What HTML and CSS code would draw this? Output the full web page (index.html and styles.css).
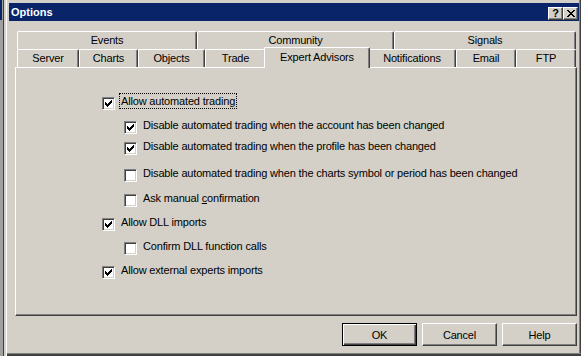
FILE: index.html
```html
<!DOCTYPE html>
<html lang="en">
<head>
    <meta charset="UTF-8">
    <title>Options</title>
    <link rel="stylesheet" href="styles.css">
</head>
<body>
    <div class="screen">
        <div class="edge"></div>

        <div class="window">
            <div class="titlebar">
                <span class="title">Options</span>
                <div class="caption-buttons">
                    <button class="cap-btn">?</button>
                    <button class="cap-btn">
                        <svg width="8" height="7" viewBox="0 0 8 7" shape-rendering="crispEdges">
                            <path d="M0 0h2v1h-2zM6 0h2v1h-2zM1 1h2v1h-2zM5 1h2v1h-2zM2 2h4v1h-4zM3 3h2v1h-2zM2 4h4v1h-4zM1 5h2v1h-2zM5 5h2v1h-2zM0 6h2v1h-2zM6 6h2v1h-2z" fill="#000"/>
                        </svg>
                    </button>
                </div>
            </div>

            <div class="dialog">
                <div class="tabs">
                    <div class="tab-row top-row">
                        <div class="tab">Events</div>
                        <div class="tab">Community</div>
                        <div class="tab">Signals</div>
                    </div>
                    <div class="tab-row bottom-row">
                        <div class="tab">Server</div>
                        <div class="tab">Charts</div>
                        <div class="tab">Objects</div>
                        <div class="tab">Trade</div>
                        <div class="tab active">Expert Advisors</div>
                        <div class="tab">Notifications</div>
                        <div class="tab">Email</div>
                        <div class="tab">FTP</div>
                    </div>
                </div>

                <div class="panel">
                    <div class="option">
                        <span class="check checked"><svg width="7" height="7" viewBox="0 0 7 7" shape-rendering="crispEdges"><path d="M0 2V5H1V6H2V7H3V6H4V5H5V4H6V3H7V0H6V1H5V2H4V3H3V4H2V3H1V2Z" fill="#000"/></svg></span>
                        <span class="label focused">Allow automated trading</span>
                    </div>
                    <div class="option sub">
                        <span class="check checked"><svg width="7" height="7" viewBox="0 0 7 7" shape-rendering="crispEdges"><path d="M0 2V5H1V6H2V7H3V6H4V5H5V4H6V3H7V0H6V1H5V2H4V3H3V4H2V3H1V2Z" fill="#000"/></svg></span>
                        <span class="label">Disable automated trading when the account has been changed</span>
                    </div>
                    <div class="option sub up">
                        <span class="check checked"><svg width="7" height="7" viewBox="0 0 7 7" shape-rendering="crispEdges"><path d="M0 2V5H1V6H2V7H3V6H4V5H5V4H6V3H7V0H6V1H5V2H4V3H3V4H2V3H1V2Z" fill="#000"/></svg></span>
                        <span class="label">Disable automated trading when the profile has been changed</span>
                    </div>
                    <div class="option sub down">
                        <span class="check"></span>
                        <span class="label">Disable automated trading when the charts symbol or period has been changed</span>
                    </div>
                    <div class="option sub nudge">
                        <span class="check"></span>
                        <span class="label">Ask manual <u>c</u>onfirmation</span>
                    </div>
                    <div class="option">
                        <span class="check checked"><svg width="7" height="7" viewBox="0 0 7 7" shape-rendering="crispEdges"><path d="M0 2V5H1V6H2V7H3V6H4V5H5V4H6V3H7V0H6V1H5V2H4V3H3V4H2V3H1V2Z" fill="#000"/></svg></span>
                        <span class="label">Allow DLL imports</span>
                    </div>
                    <div class="option sub">
                        <span class="check"></span>
                        <span class="label">Confirm DLL function calls</span>
                    </div>
                    <div class="option">
                        <span class="check checked"><svg width="7" height="7" viewBox="0 0 7 7" shape-rendering="crispEdges"><path d="M0 2V5H1V6H2V7H3V6H4V5H5V4H6V3H7V0H6V1H5V2H4V3H3V4H2V3H1V2Z" fill="#000"/></svg></span>
                        <span class="label">Allow external experts imports</span>
                    </div>
                </div>

                <div class="buttons">
                    <button class="btn default">OK</button>
                    <button class="btn">Cancel</button>
                    <button class="btn help">Help</button>
                </div>
            </div>
        </div>
    </div>
</body>
</html>
```

FILE: styles.css
```css
* {
    margin: 0;
    padding: 0;
    box-sizing: border-box;
}

body {
    background-color: #d4d0c8;
    font-family: 'Liberation Sans', Arial, sans-serif;
    font-size: 11px;
    letter-spacing: -0.17px;
    color: #000;
    overflow: hidden;
}

.screen {
    display: flex;
    width: 581px;
    height: 356px;
}

/* strip of whatever sits left of the dialog */
.edge {
    flex: none;
    width: 4px;
    background:
        linear-gradient(#0a246a, #0a246a) 0 0 / 2px 20px no-repeat,
        linear-gradient(to right, #a0a0a0 3px, #404040 3px);
}

.window {
    flex: 1;
    display: flex;
    flex-direction: column;
    padding: 3px 2px 3px 5px;
    background-color: #d4d0c8;
    box-shadow:
        inset 2px 0 #d4d0c8,
        inset 3px 0 #fff,
        inset 0 -2px #404040,
        inset 0 -3px #808080,
        inset -1px 0 #404040,
        inset -2px 0 #808080;
}

.titlebar {
    display: flex;
    justify-content: space-between;
    height: 18px;
    padding-left: 2px;
    background-color: #0a246a;
}

.title {
    color: #fff;
    font-weight: bold;
    font-size: 11px;
    letter-spacing: 0;
    line-height: 18px;
}

.caption-buttons {
    display: flex;
    margin: 4px 1px 0 0;
}

.cap-btn {
    display: flex;
    align-items: center;
    justify-content: center;
    width: 15px;
    height: 13px;
    background-color: #d4d0c8;
    border: 1px solid;
    border-color: #fff #404040 #404040 #fff;
    box-shadow: inset -1px -1px #808080;
    font-family: 'Liberation Sans', Arial, sans-serif;
    font-weight: bold;
    font-size: 11px;
    line-height: 11px;
    color: #000;
}

.dialog {
    flex: 1;
    display: flex;
    flex-direction: column;
    padding: 10px 2px 0 6px;
}

.tabs {
    margin: 0 1px 0 2px;
}

.tab-row {
    display: grid;
    height: 18px;
}

.top-row {
    grid-template-columns: 180px 197px 182px;
}

.bottom-row {
    grid-template-columns: 62px 59px 67px 61px 102px 88px 60px 60px;
}

.tab {
    border: 1px solid #fff;
    border-right-color: #404040;
    border-bottom: none;
    border-radius: 2px 2px 0 0;
    box-shadow: inset -1px 0 #808080;
    background-color: #d4d0c8;
    text-align: center;
    line-height: 13px;
    padding-top: 2px;
    white-space: nowrap;
}

.tab.active {
    position: relative;
    z-index: 1;
    margin: -2px -2px -1px;
    padding-top: 3px;
}

.panel {
    height: 249px;
    padding: 25px 0 0 86px;
    border: 1px solid;
    border-color: #fff #404040 #404040 #fff;
    box-shadow: inset -1px -1px #808080;
}

.option {
    display: flex;
    align-items: flex-start;
    height: 24px;
}

.option.sub {
    padding-left: 22px;
}

.option.up {
    margin-top: -3px;
}

.option.down {
    margin-top: 3px;
}

.option.nudge {
    margin-top: 1px;
}

.check {
    flex: none;
    width: 13px;
    height: 13px;
    margin-top: 4px;
    padding: 2px;
    background-color: #fff;
    border: 1px solid;
    border-color: #808080 #fff #fff #808080;
    box-shadow: inset 1px 1px #404040, inset -1px -1px #d4d0c8;
}

.check svg {
    display: block;
}

.label {
    margin-left: 4px;
    padding: 0 1px;
    line-height: 14px;
    border: 1px dotted transparent;
    white-space: nowrap;
}

.label.focused {
    border-color: #000;
}

.buttons {
    display: flex;
    justify-content: flex-end;
    gap: 5px;
    margin-top: 7px;
}

.btn {
    width: 75px;
    height: 23px;
    background-color: #d4d0c8;
    border: 1px solid;
    border-color: #fff #404040 #404040 #fff;
    box-shadow: inset -1px -1px #808080;
    font-family: 'Liberation Sans', Arial, sans-serif;
    font-size: 11px;
    letter-spacing: -0.17px;
    color: #000;
}

.btn.default {
    border-color: #000;
    box-shadow:
        inset 1px 1px #fff,
        inset -1px -1px #404040,
        inset -2px -2px #808080;
}
```
